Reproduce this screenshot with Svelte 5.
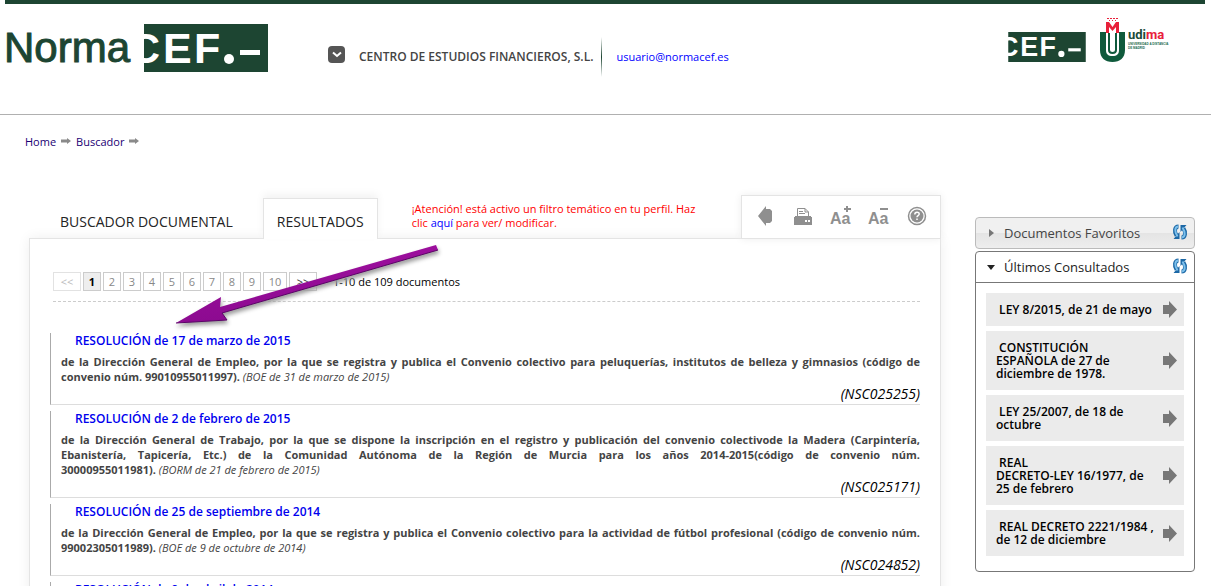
<script>
  const pages = [2, 3, 4, 5, 6, 7, 8, 9, 10]

  const results = [
    {
      title: 'RESOLUCIÓN de 17 de marzo de 2015',
      text: 'de la Dirección General de Empleo, por la que se registra y publica el Convenio colectivo para peluquerías, institutos de belleza y gimnasios (código de convenio núm.',
      code: '99010955011997).',
      source: '(BOE de 31 de marzo de 2015)',
      ref: '(NSC025255)'
    },
    {
      title: 'RESOLUCIÓN de 2 de febrero de 2015',
      text: 'de la Dirección General de Trabajo, por la que se dispone la inscripción en el registro y publicación del convenio colectivode la Madera (Carpintería, Ebanistería, Tapicería, Etc.) de la Comunidad Autónoma de la Región de Murcia para los años 2014-2015(código de convenio núm.',
      code: '30000955011981).',
      source: '(BORM de 21 de febrero de 2015)',
      ref: '(NSC025171)'
    },
    {
      title: 'RESOLUCIÓN de 25 de septiembre de 2014',
      text: 'de la Dirección General de Empleo, por la que se registra y publica el Convenio colectivo para la actividad de fútbol profesional (código de convenio núm.',
      code: '99002305011989).',
      source: '(BOE de 9 de octubre de 2014)',
      ref: '(NSC024852)'
    },
    { title: 'RESOLUCIÓN de 9 de abril de 2014' }
  ]

  const recent = [
    ' LEY 8/2015, de 21 de mayo',
    ' CONSTITUCIÓN\nESPAÑOLA de 27 de\ndiciembre de 1978.',
    ' LEY 25/2007, de 18 de\noctubre',
    ' REAL\nDECRETO-LEY 16/1977, de\n25 de febrero',
    ' REAL DECRETO 2221/1984 ,\nde 12 de diciembre'
  ]
</script>

{#snippet cef(cls)}
  <svg class={cls} viewBox="0 0 124 48" role="img" aria-label="CEF.-">
    <rect width="124" height="48" fill="#1d4532" />
    <g class="cef-text" fill="#fff">
      <text x="-15" y="39">C</text>
      <text x="19" y="39">E</text>
      <text x="50" y="39">F</text>
    </g>
    <circle cx="85" cy="35" r="5" fill="#fff" />
    <rect x="96" y="26" width="20" height="5" fill="#fff" />
  </svg>
{/snippet}

{#snippet crumbArrow()}
  <svg width="10" height="6" viewBox="0 0 10 6" aria-hidden="true">
    <path d="M0 1.500h6V0l4 3-4 3V4.500H0z" fill="#8a8a8a" />
  </svg>
{/snippet}

{#snippet refresh()}
  <button class="refresh" aria-label="Actualizar">
    <svg width="16" height="16" viewBox="0 0 16 16" aria-hidden="true">
      <g fill="none" stroke="#1c68a6" stroke-width="4">
        <path d="M6.500 2.500C2.500 2.500 2 8 4.500 11.500" />
        <path d="M9.500 13.500c4 0 4.500-5.500 2-9" />
      </g>
      <path d="M7.500 8v7H1.500zM8.500 8V1h6z" fill="#1c68a6" />
      <g fill="none" stroke="#7cc0ec" stroke-width="2">
        <path d="M6 2.500C2.500 3 2.500 8 5.500 12.500" />
        <path d="M10 13.500c3.500-.5 3.500-5.500.5-10" />
      </g>
    </svg>
  </button>
{/snippet}

<div class="topbar"></div>

<header class="header">
  <a class="brand" href="#home">
    <span class="brand__name">Norma</span>
    {@render cef('brand__cef')}
  </a>

  <div class="account">
    <button class="account__toggle" aria-label="Menú de usuario">
      <svg width="10" height="7" viewBox="0 0 10 7" aria-hidden="true">
        <path d="M1 1.500l4 3.500 4-3.500" fill="none" stroke="#fff" stroke-width="2" />
      </svg>
    </button>
    <strong class="account__name">CENTRO DE ESTUDIOS FINANCIEROS, S.L.</strong>
    <span class="account__line"></span>
    <a class="account__mail" href="mailto:usuario@normacef.es">usuario@normacef.es</a>
  </div>

  <div class="partners">
    {@render cef('partners__cef')}
    <svg class="partners__udima" width="76" height="46" viewBox="0 0 76 46" role="img" aria-label="udima">
      <g fill="#e8203a">
        <path d="M7 16V5h3l3.500 5L17 5h3v11h-3v-6l-3.500 4L10 10v6z" />
        <path d="M8 1h2v1H8zm3 0h2v1h-2zm3 0h2v1h-2zm3 0h2v1h-2zM10 3h1v1h-1zm3 0h1v1h-1zm3 0h1v1h-1z" />
      </g>
      <path d="M1 15h6v18c0 4 2 6 6.500 6s6.500-2 6.500-6V15h6v18c0 8-5 12-12.500 12S1 41 1 33z" fill="#0f5a3c" />
      <path d="M10 16v17c0 2 1 3 3.500 3S17 35 17 33V16" fill="none" stroke="#0f5a3c" stroke-width="2" />
      <text class="udima-name" x="29" y="22" fill="#1b4a38">udi<tspan fill="#e8203a">ma</tspan></text>
      <g class="udima-sub" fill="#1b6a50">
        <text x="29" y="28">UNIVERSIDAD A DISTANCIA</text>
        <text x="29" y="32">DE MADRID</text>
      </g>
    </svg>
  </div>
</header>

<nav class="crumbs" aria-label="Ruta">
  <a href="#home">Home</a>
  {@render crumbArrow()}
  <a href="#buscador">Buscador</a>
  {@render crumbArrow()}
</nav>

<div class="layout">
  <main class="main">
    <div class="tabs">
      <a class="tab" href="#buscador">BUSCADOR DOCUMENTAL</a>
      <a class="tab tab--active" href="#resultados">RESULTADOS</a>
      <p class="notice">
        ¡Atención! está activo un filtro temático en tu perfil. Haz clic <a href="#perfil">aquí</a> para ver/ modificar.
      </p>
      <div class="tools">
        <button aria-label="Volver">
          <svg width="14" height="22" viewBox="0 0 14 22" aria-hidden="true">
            <path d="M0 11L8 1v3h4l2 2v10l-2 2H8v3z" fill="#8f8f8f" />
          </svg>
        </button>
        <button aria-label="Imprimir">
          <svg width="20" height="18" viewBox="0 0 20 18" aria-hidden="true">
            <path d="M1 10h18v8H1z" fill="#8f8f8f" />
            <path d="M4.500 9V1.500H12L15.500 5v4M12 1.500V5h3.500M2 9.500h16" fill="none" stroke="#8f8f8f" />
            <path d="M6 4h4v1H6zm0 2h6v1H6z" fill="#8f8f8f" />
            <path d="M12 13h2v2h-2zm3 0h2v2h-2z" fill="#fff" />
          </svg>
        </button>
        <button aria-label="Aumentar texto">
          <svg class="font-icon" width="22" height="22" viewBox="0 0 22 22" aria-hidden="true">
            <text x="0" y="19">Aa</text>
            <path d="M14 3h2V1h2v2h3v2h-3v2h-2V5h-2z" />
          </svg>
        </button>
        <button aria-label="Reducir texto">
          <svg class="font-icon" width="22" height="22" viewBox="0 0 22 22" aria-hidden="true">
            <text x="0" y="19">Aa</text>
            <path d="M12 3h8v2h-8z" />
          </svg>
        </button>
        <button aria-label="Ayuda">
          <svg width="20" height="20" viewBox="0 0 20 20" aria-hidden="true">
            <circle cx="10" cy="10" r="8.500" fill="none" stroke="#8f8f8f" stroke-width="1.500" />
            <circle cx="10" cy="10" r="6.500" fill="#8f8f8f" />
            <path d="M7.800 8.500c0-3 4.400-3 4.400-.5 0 1.600-2.200 1.500-2.200 3.300M10 12.500V14" fill="none" stroke="#fff" stroke-width="1.500" />
          </svg>
        </button>
      </div>
    </div>

    <section class="panel">
      <div class="pager">
        <a class="pager__item pager__item--off" href="#prev">&lt;&lt;</a>
        <a class="pager__item pager__item--current" href="#1">1</a>
        {#each pages as page}
          <a class="pager__item" class:pager__item--wide={page > 9} href="#{page}">{page}</a>
        {/each}
        <a class="pager__item pager__item--next" href="#next">&gt;&gt;</a>
        <span class="pager__count">1-10 de 109 documentos</span>
      </div>

      {#each results as item}
        <article class="result">
          <h2><a href="#doc">{item.title}</a></h2>
          {#if item.text}
            <p class="result__text">
              {item.text}
              <span class="result__code">{item.code} <em>{item.source}</em></span>
            </p>
            <p class="result__ref">{item.ref}</p>
          {/if}
        </article>
      {/each}

      <svg class="pointer" width="274" height="90" viewBox="0 0 274 90" aria-hidden="true">
        <defs>
          <linearGradient id="purple" x1="0" y1="0" x2="0.200" y2="1">
            <stop offset="0" stop-color="#a010a0" />
            <stop offset="1" stop-color="#8c0a90" />
          </linearGradient>
        </defs>
        <path d="M4 80L49 54l-1 10L264 2l2 5L50 70l5 7z" fill="url(#purple)" />
        <path d="M4 80l51-3-5-7L266 7" fill="none" stroke="#5c0468" />
      </svg>
    </section>
  </main>

  <aside class="side">
    <div class="side__head side__head--closed">
      <svg width="5" height="8" viewBox="0 0 5 8" aria-hidden="true"><path d="M0 0l5 4-5 4z" fill="#777" /></svg>
      <h3>Documentos Favoritos</h3>
      {@render refresh()}
    </div>
    <div class="side__box">
      <div class="side__head">
        <svg width="8" height="5" viewBox="0 0 8 5" aria-hidden="true"><path d="M0 0h8L4 5z" fill="#222" /></svg>
        <h3>Últimos Consultados</h3>
        {@render refresh()}
      </div>
      <ul class="recent">
        {#each recent as title}
          <li>
            <a href="#doc">
              <span>{title}</span>
              <svg width="14" height="17" viewBox="0 0 14 17" aria-hidden="true">
                <path d="M0 4h6V0l8 8.500L6 17v-4H0z" fill="#777" />
              </svg>
            </a>
          </li>
        {/each}
      </ul>
    </div>
  </aside>
</div>

<style>
  :global(html) {
    scrollbar-width: none;
  }
  :global(body) {
    background: #fff;
    color: #000;
    font-family: "Open Sans", "Noto Sans", sans-serif;
    font-size: 12px;
  }

  a {
    color: #00c;
    text-decoration: none;
  }
  button {
    display: flex;
    align-items: center;
    justify-content: center;
    padding: 0;
    border: 0;
    background: none;
    cursor: pointer;
  }
  h2, h3, p, ul {
    margin: 0;
    padding: 0;
  }

  .topbar {
    height: 4px;
    margin: 0 6px 0 5px;
    background: #1d4532;
  }

  /* Header */
  .header {
    display: flex;
    align-items: flex-start;
    height: 110px;
    border-bottom: 1px solid #b0b0b0;
  }
  .brand {
    display: flex;
    margin: 20px 0 0 4px;
    color: #1d4532;
  }
  .brand__name {
    width: 140px;
    font: 42px/48px "Liberation Sans", Arial, sans-serif;
    -webkit-text-stroke: 1px #1d4532;
  }
  .brand__cef {
    width: 124px;
    height: 48px;
  }
  .cef-text {
    font: bold 43px "Liberation Sans", Arial, sans-serif;
  }
  .account {
    display: flex;
    align-items: center;
    height: 40px;
    margin: 33px 0 0 60px;
  }
  .account__toggle {
    width: 17px;
    height: 17px;
    margin: 0 14px 6px 0;
    border-radius: 4px;
    background: #555;
  }
  .account__name {
    padding-bottom: 2px;
    color: #444;
    font-weight: 600;
  }
  .account__line {
    width: 1px;
    height: 40px;
    margin: 0 14px 0 8px;
    background: linear-gradient(#fff, #1d4532, #fff);
  }
  .account__mail {
    padding-bottom: 2px;
    color: #00f;
    font-size: 11px;
  }
  .partners {
    display: flex;
    margin: 13px 36px 0 auto;
  }
  .partners__cef {
    width: 78px;
    height: 30px;
    margin: 15px 13px 0 0;
  }
  .udima-name {
    font: bold 13px Roboto, Arial, sans-serif;
  }
  .udima-sub {
    font: bold 3px "Liberation Sans", Arial, sans-serif;
  }

  .crumbs {
    display: flex;
    align-items: center;
    gap: 5px;
    height: 16px;
    margin: 18px 25px 46px;
    font-size: 11px;
  }
  .crumbs a {
    color: #1a0073;
  }

  .layout {
    display: flex;
    align-items: flex-start;
    gap: 34px;
    margin: 0 16px 0 29px;
  }
  .main {
    flex: 1;
    min-width: 0;
  }

  /* Tabs */
  .tabs {
    display: flex;
    align-items: flex-end;
  }
  .tab {
    padding: 0 30px 0 31px;
    color: #222;
    font-size: 14px;
    line-height: 32px;
  }
  .tab--active {
    position: relative;
    z-index: 1;
    margin-bottom: -1px;
    padding: 6px 13px 0;
    border: 1px solid #e4e4e4;
    border-bottom: 0;
    background: #fff;
    box-shadow: 0 -4px 8px #f3f3f3;
    line-height: 34px;
  }
  .notice {
    flex: 0 1 292px;
    margin: 0 0 8px 34px;
    color: #f00;
    font-size: 11px;
    line-height: 14px;
  }
  .notice a {
    color: #00f;
  }
  .tools {
    display: flex;
    align-items: center;
    box-sizing: border-box;
    width: 200px;
    height: 44px;
    margin: 0 0 -1px auto;
    padding: 0 4px 3px;
    border: 1px solid #e4e4e4;
    background: #fff;
    box-shadow: 0 0 8px #eee;
    position: relative;
    z-index: 1;
  }
  .tools button {
    flex: 1;
  }
  .font-icon {
    fill: #8f8f8f;
    font: bold 16px "Liberation Sans", Arial, sans-serif;
  }

  /* Results */
  .panel {
    position: relative;
    padding: 33px 20px 0;
    border: 1px solid #e4e4e4;
    background: #fff;
    box-shadow: 0 0 12px #eee;
  }
  .pager {
    display: flex;
    gap: 2px;
    height: 19px;
    margin: 0 0 31px 3px;
    padding-bottom: 10px;
    border-bottom: 1px dashed #ccc;
  }
  .pager__item {
    box-sizing: border-box;
    width: 18px;
    border: 1px solid #ccc;
    color: #888;
    font-size: 11px;
    line-height: 18px;
    text-align: center;
  }
  .pager__item--off,
  .pager__item--next {
    width: 28px;
  }
  .pager__item--off {
    border-color: #e2e2e2;
    color: #bbb;
  }
  .pager__item--current {
    background: #eee;
    color: #000;
    font-weight: bold;
  }
  .pager__item--wide {
    width: 24px;
  }
  .pager__item--next {
    color: #333;
  }
  .pager__count {
    margin-left: 14px;
    font-size: 11px;
    line-height: 20px;
  }
  .result {
    margin-bottom: 6px;
    padding-left: 10px;
    border-left: 1px solid #aaa;
    border-bottom: 1px solid #ddd;
  }
  .result h2 {
    padding: 0 0 6px 14px;
    font-size: 12px;
    font-weight: 600;
    line-height: 15px;
  }
  .result h2 a {
    color: #00e;
  }
  .result__text {
    color: #444;
    font-size: 11px;
    font-weight: bold;
    line-height: 15px;
    text-align: justify;
  }
  .result__code {
    white-space: nowrap;
  }
  .result__text em {
    font-weight: normal;
  }
  .result__ref {
    font-size: 14px;
    font-style: italic;
    line-height: 20px;
    text-align: right;
  }
  .pointer {
    position: absolute;
    top: 4px;
    left: 142px;
    filter: drop-shadow(1px 3px 2px #999);
    pointer-events: none;
  }

  /* Sidebar */
  .side {
    width: 220px;
    margin-top: 22px;
  }
  .side__head {
    display: flex;
    align-items: center;
    box-sizing: border-box;
    height: 31px;
    padding: 0 6px 0 11px;
    border-bottom: 1px solid #777;
  }
  .side__head svg {
    flex: none;
  }
  .side__head h3 {
    flex: 1;
    margin-left: 9px;
    color: #222;
    font-size: 13px;
    font-weight: normal;
  }
  .side__head--closed {
    height: 32px;
    margin-bottom: 2px;
    padding-left: 13px;
    border: 1px solid #bbb;
    border-radius: 4px;
    background: linear-gradient(#f0f0f0 50%, #e4e4e4 50%, #eee);
  }
  .side__head--closed h3 {
    margin-left: 10px;
    color: #444;
  }
  .side__box {
    border: 1px solid #777;
    border-radius: 4px;
  }
  .refresh {
    align-self: flex-start;
    margin-top: 6px;
  }
  .recent {
    display: grid;
    gap: 5px;
    padding: 10px 10px 15px;
    list-style: none;
  }
  .recent a {
    display: flex;
    align-items: center;
    justify-content: space-between;
    padding: 10px 7px 10px 10px;
    background: #ebebeb;
    color: #000;
    font-size: 12px;
    font-weight: 600;
    line-height: 13px;
    white-space: pre;
  }
  .recent svg {
    margin: -4px 0;
  }
</style>
